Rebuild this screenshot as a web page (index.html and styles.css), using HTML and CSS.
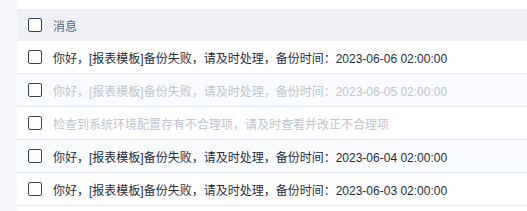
FILE: index.html
```html
<!DOCTYPE html>
<html lang="zh-CN">
<head>
    <meta charset="UTF-8">
    <meta name="viewport" content="width=device-width, initial-scale=1.0">
    <title>消息</title>
    <link rel="stylesheet" href="styles.css">
</head>
<body>
    <div class="side"></div>
    <div class="main">
        <div class="msg-table">
            <div class="row head">
                <span class="check"></span>
                <span class="text">消息</span>
            </div>
            <div class="row">
                <span class="check"></span>
                <span class="text">你好，[报表模板]备份失败，请及时处理，备份时间：2023-06-06 02:00:00</span>
            </div>
            <div class="row stripe read">
                <span class="check"></span>
                <span class="text">你好，[报表模板]备份失败，请及时处理，备份时间：2023-06-05 02:00:00</span>
            </div>
            <div class="row read">
                <span class="check"></span>
                <span class="text">检查到系统环境配置存有不合理项，请及时查看并改正不合理项</span>
            </div>
            <div class="row stripe">
                <span class="check"></span>
                <span class="text">你好，[报表模板]备份失败，请及时处理，备份时间：2023-06-04 02:00:00</span>
            </div>
            <div class="row">
                <span class="check"></span>
                <span class="text">你好，[报表模板]备份失败，请及时处理，备份时间：2023-06-03 02:00:00</span>
            </div>
        </div>
    </div>
</body>
</html>
```

FILE: styles.css
```css
body {
    margin: 0;
    display: flex;
    min-height: 100vh;
    font-family: "Liberation Sans", "Noto Sans CJK SC", sans-serif;
    font-size: 12px;
    color: #1f2d3d;
    background: #fff;
}
.side {
    width: 17px;
    flex-shrink: 0;
    background-color: #f6f7fb;
}
.main {
    flex: 1;
    padding-top: 9px;
}
.row {
    display: flex;
    align-items: center;
    height: 32px;
    border-bottom: 1px solid #dfe8f4;
    padding-left: 11px;
}
.row.head {
    background-color: #eef0f5;
    border-bottom: none;
    color: #5a6577;
}
.row.stripe {
    background-color: #f9fbfe;
}
.row.read {
    color: #c0c4cc;
}
.check {
    width: 12px;
    height: 12px;
    border: 1px solid #3a4455;
    border-radius: 2px;
    background: #fff;
    margin-right: 11px;
    flex-shrink: 0;
}
.text {
    white-space: nowrap;
}
```
